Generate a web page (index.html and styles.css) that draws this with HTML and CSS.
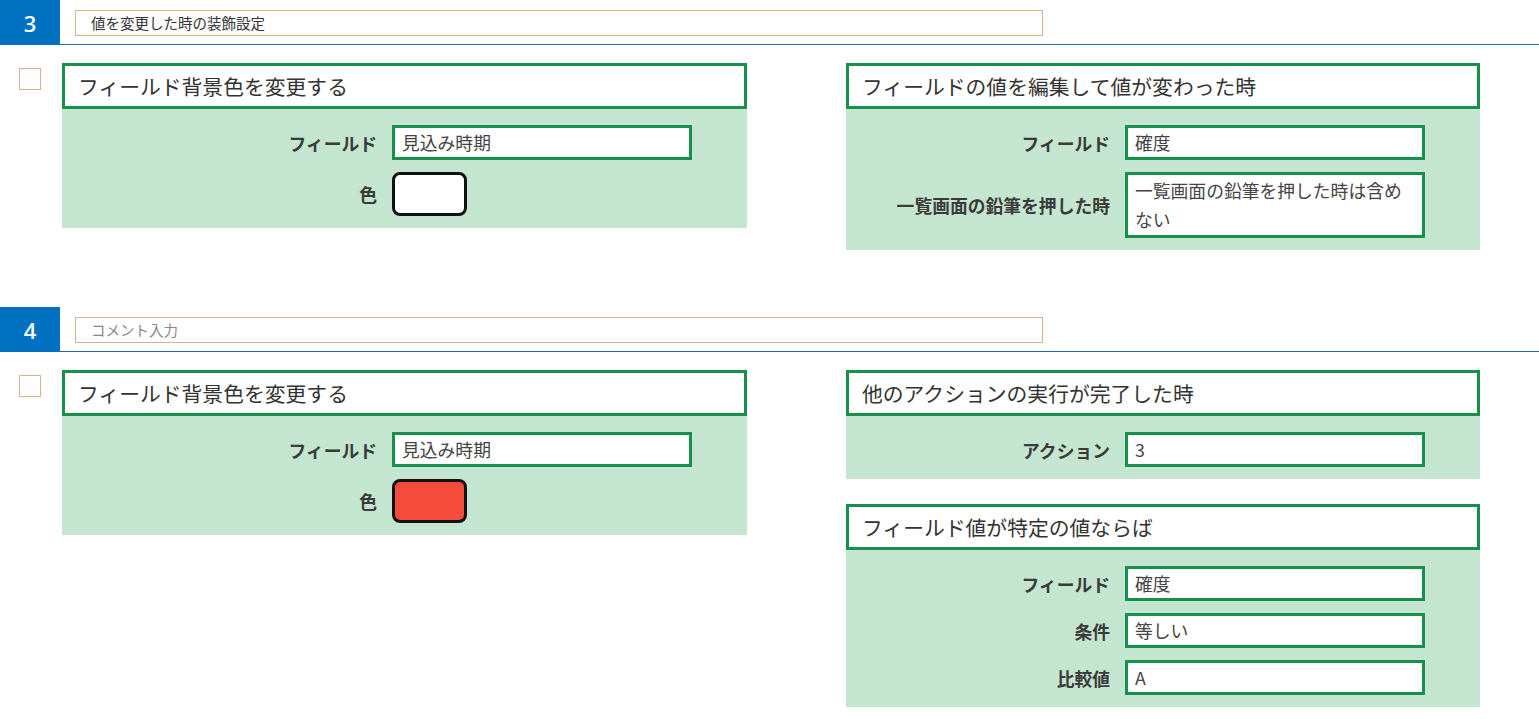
FILE: index.html
```html
<!DOCTYPE html>
<html lang="ja">
<head>
<meta charset="utf-8">
<link rel="stylesheet" href="styles.css">
</head>
<body>
<section class="section">
  <div class="sec-head">
    <div class="sec-num">3</div>
    <div class="comment">値を変更した時の装飾設定</div>
  </div>
  <div class="sec-body">
    <div class="check"></div>
    <div class="card left">
      <div class="card-title">フィールド背景色を変更する</div>
      <div class="card-body">
        <div class="label">フィールド</div>
        <div class="field">見込み時期</div>
        <div class="label">色</div>
        <div class="color-cell"><div class="swatch white"></div></div>
      </div>
    </div>
    <div class="right-col">
      <div class="card">
        <div class="card-title">フィールドの値を編集して値が変わった時</div>
        <div class="card-body">
          <div class="label">フィールド</div>
          <div class="field">確度</div>
          <div class="label">一覧画面の鉛筆を押した時</div>
          <div class="field multi">一覧画面の鉛筆を押した時は含めない</div>
        </div>
      </div>
    </div>
  </div>
</section>
<section class="section">
  <div class="sec-head">
    <div class="sec-num">4</div>
    <div class="comment placeholder">コメント入力</div>
  </div>
  <div class="sec-body">
    <div class="check"></div>
    <div class="card left">
      <div class="card-title">フィールド背景色を変更する</div>
      <div class="card-body">
        <div class="label">フィールド</div>
        <div class="field">見込み時期</div>
        <div class="label">色</div>
        <div class="color-cell"><div class="swatch red"></div></div>
      </div>
    </div>
    <div class="right-col">
      <div class="card">
        <div class="card-title">他のアクションの実行が完了した時</div>
        <div class="card-body">
          <div class="label">アクション</div>
          <div class="field">3</div>
        </div>
      </div>
      <div class="card">
        <div class="card-title">フィールド値が特定の値ならば</div>
        <div class="card-body">
          <div class="label">フィールド</div>
          <div class="field">確度</div>
          <div class="label">条件</div>
          <div class="field">等しい</div>
          <div class="label">比較値</div>
          <div class="field">A</div>
        </div>
      </div>
    </div>
  </div>
</section>
</body>
</html>
```

FILE: styles.css
```css
html, body {
  margin: 0;
  padding: 0;
  background: #fff;
}
body {
  font-family: "Noto Sans CJK JP", "Noto Sans", sans-serif;
  color: #333;
}
.section {
  margin-bottom: 57px;
}
.sec-head {
  display: flex;
  align-items: flex-start;
  height: 44px;
  border-bottom: 1px solid #1c6db3;
}
.sec-num {
  flex: none;
  width: 60px;
  height: 45px;
  background: #0070c0;
  color: #fff;
  font-family: "Open Sans", "Noto Sans", sans-serif;
  font-weight: 600;
  font-size: 22px;
  display: flex;
  align-items: center;
  justify-content: center;
}
.comment {
  margin-left: 15px;
  margin-top: 10px;
  width: 951px;
  height: 24px;
  border: 1px solid #d2b48f;
  font-size: 14.5px;
  line-height: 24px;
  padding-left: 15px;
  color: #333;
}
.comment.placeholder {
  color: #888;
}
.sec-body {
  display: flex;
  align-items: flex-start;
  padding-top: 18px;
  padding-left: 19px;
}
.check {
  flex: none;
  width: 20px;
  height: 20px;
  border: 1px solid #d2b48f;
  margin-top: 5px;
  margin-right: 21px;
}
.card.left {
  width: 685px;
  margin-right: 99px;
}
.right-col {
  width: 634px;
  display: flex;
  flex-direction: column;
  gap: 25px;
}
.card-title {
  height: 40px;
  border: 3px solid #16904a;
  background: #fff;
  font-size: 20.8px;
  line-height: 40px;
  padding-left: 13px;
  color: #333;
  white-space: nowrap;
}
.card-body {
  background: #c4e5cf;
  display: grid;
  grid-template-columns: 1fr 300px;
  column-gap: 15px;
  row-gap: 12px;
  padding: 16px 55px 12px 0;
  align-items: center;
}
.label {
  text-align: right;
  font-weight: bold;
  font-size: 17.8px;
  color: #3a3a3a;
  white-space: nowrap;
}
.field {
  height: 29px;
  border: 3px solid #16904a;
  background: #fff;
  font-size: 17.8px;
  line-height: 29px;
  padding-left: 7px;
  color: #444;
}
.field.multi {
  line-height: 29px;
  padding-top: 1px;
  height: 59px;
  padding-right: 8px;
}
.color-cell {
  display: flex;
}
.swatch {
  width: 69px;
  height: 38px;
  border: 3px solid #111;
  border-radius: 8px;
}
.swatch.white { background: #fff; }
.swatch.red { background: #f44b3b; }
```
